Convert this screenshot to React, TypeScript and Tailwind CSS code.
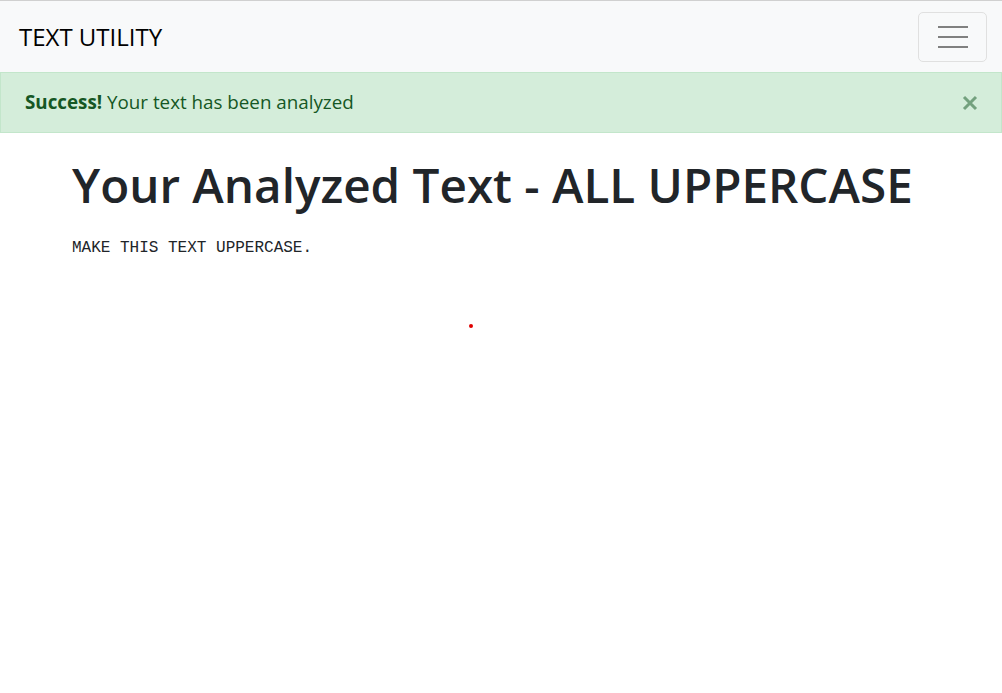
export default function App() {
  return (
    <div className="relative min-h-[693px] bg-white text-[#212529] font-['Open_Sans','Noto_Sans',sans-serif]">
      <nav className="flex h-[72px] items-center justify-between border-t border-[#d0d0d0] bg-[#f8f9fa] pl-[19px] pr-[15px]">
        <span className="text-[24px] text-black">TEXT UTILITY</span>
        <button
          type="button"
          className="flex h-[50px] w-[69px] flex-col items-center justify-center gap-[8px] rounded-[5px] border border-[#e0e0e0]"
        >
          <span className="block h-[2px] w-[30px] bg-[#808080]" />
          <span className="block h-[2px] w-[30px] bg-[#808080]" />
          <span className="block h-[2px] w-[30px] bg-[#808080]" />
        </button>
      </nav>

      <div className="flex h-[61px] items-center justify-between border border-[#c3e6cb] bg-[#d4edda] pl-[24px] pr-[23px] text-[18.8px] text-[#155724]">
        <p>
          <strong className="font-bold">Success!</strong> Your text has been analyzed
        </p>
        <button type="button" className="text-[#155724] opacity-50">
          <svg width="16" height="16" viewBox="0 0 16 16">
            <path d="M2 2L14 14M14 2L2 14" stroke="currentColor" strokeWidth="3" />
          </svg>
        </button>
      </div>

      <main className="pl-[72px] pt-[23px]">
        <h1 className="text-[47.6px] leading-[1.2] font-semibold">
          Your Analyzed Text - ALL UPPERCASE
        </h1>
        <pre className="mt-[23px] font-['Liberation_Mono',monospace] text-[16px]">MAKE THIS TEXT UPPERCASE.</pre>
      </main>

      <span className="absolute left-[469px] top-[324px] h-[4px] w-[4px] rounded-full bg-[#e00000]" />
    </div>
  );
}
